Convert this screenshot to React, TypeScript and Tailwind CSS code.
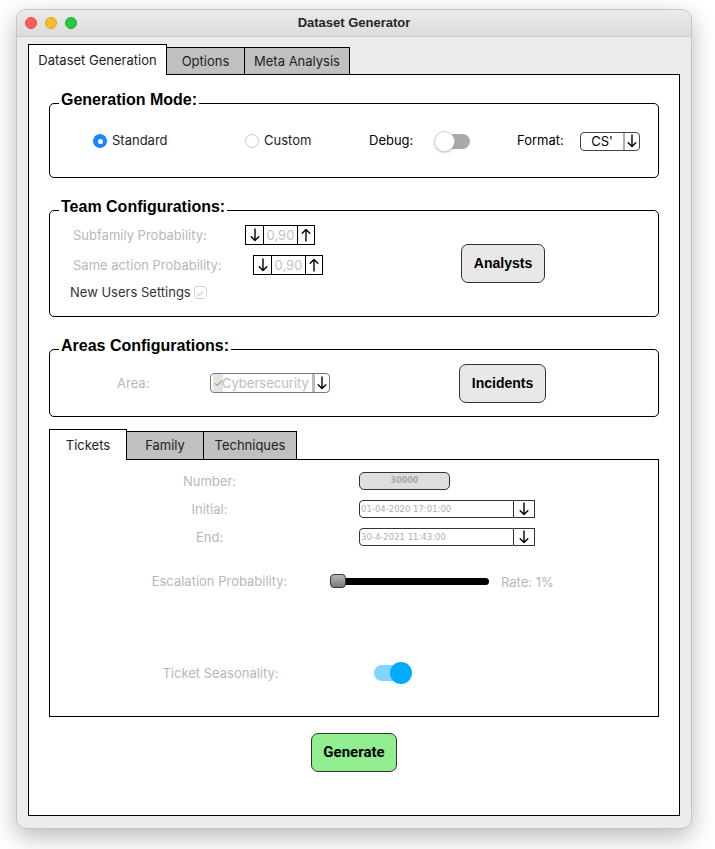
import React from 'react';

const ui = "font-['Inter',sans-serif]";
const bold = "font-['Liberation_Sans',Arial,sans-serif] font-bold";

function Arrow({ up = false }: { up?: boolean }) {
  return (
    <svg width="10" height="14" viewBox="0 0 10 14" fill="none" stroke="black" strokeWidth="1.4" strokeLinecap="round" strokeLinejoin="round">
      {up ? <path d="M5 13V1.5M1.2 5.3 5 1.5l3.8 3.8" /> : <path d="M5 1v11.5M1.2 8.7 5 12.5l3.8-3.8" />}
    </svg>
  );
}

function Group({ title, className, children }: { title: string; className: string; children: React.ReactNode }) {
  return (
    <div className={`relative border border-black rounded-[5px] ${className}`}>
      <span className={`absolute -top-[14px] left-[9px] bg-white px-[2px] text-[16px] leading-[20px] text-black ${bold}`}>
        {title}
      </span>
      {children}
    </div>
  );
}

function Spinner() {
  return (
    <div className="flex h-[20px] border border-black text-[13px] leading-none">
      <div className="w-[17px] flex items-center justify-center"><Arrow /></div>
      <div className="w-[35px] flex items-center justify-center border-l border-r border-black text-[#c4c4c4]">0,90</div>
      <div className="w-[16px] flex items-center justify-center"><Arrow up /></div>
    </div>
  );
}

function DateField({ value }: { value: string }) {
  return (
    <div className="flex h-[18px] w-[176px]">
      <div className="flex-1 flex items-center rounded-l-[4px] border border-[#333] pl-[1px] text-[8.5px] text-[#b0b0b0] font-['DejaVu_Sans',sans-serif]">
        {value}
      </div>
      <div className="w-[21px] flex items-center justify-center border border-l-0 border-[#333]">
        <Arrow />
      </div>
    </div>
  );
}

export default function App() {
  const label = `text-[13px] text-[#b8b8b8] ${ui}`;
  return (
    <div className="min-h-screen bg-white pt-[9px] pl-[16px]">
      <div className="w-[676px] h-[820px] rounded-[10px] bg-[#ececec] border border-[#c4c4c4] overflow-hidden shadow-[0_8px_24px_rgba(0,0,0,0.28)]">
        {/* title bar */}
        <div className="relative h-[27px] border-b border-[#c9c9c9] bg-gradient-to-b from-[#ebebeb] to-[#dcdcdc] flex items-center justify-center">
          <div className="absolute left-[8px] top-[7px] flex gap-[8px]">
            <span className="w-[12px] h-[12px] rounded-full bg-[#ff5f57] border border-[#e2463f]" />
            <span className="w-[12px] h-[12px] rounded-full bg-[#febc2e] border border-[#e1a116]" />
            <span className="w-[12px] h-[12px] rounded-full bg-[#28c840] border border-[#1aab29]" />
          </div>
          <span className={`text-[13px] text-[#262626] ${bold}`}>Dataset Generator</span>
        </div>

        <div className="pt-[7px] pl-[11px]">
          {/* tabs */}
          <div className={`flex items-end text-[13px] text-[#222] ${ui}`}>
            <div className="relative z-10 -mb-px h-[31px] w-[139px] bg-white border border-b-0 border-black flex items-start pt-[6px] justify-center">
              Dataset Generation
            </div>
            <div className="h-[27px] w-[78px] bg-[#c0c0c0] border border-l-0 border-b-0 border-black flex items-center justify-center pt-[1px]">
              Options
            </div>
            <div className="h-[27px] w-[105px] bg-[#c0c0c0] border border-l-0 border-b-0 border-black flex items-center justify-center pt-[1px]">
              Meta Analysis
            </div>
          </div>

          {/* main panel */}
          <div className="w-[652px] h-[742px] bg-white border border-black px-[20px] pt-[28px]">
            <Group title="Generation Mode:" className="h-[75px]">
              <div className={`h-full flex items-center pt-[1px] pl-[43px] text-[13px] text-[#222] ${ui}`}>
                <div className="w-[152px] flex items-center">
                  <span className="w-[14px] h-[14px] rounded-full bg-[#1a86ff] flex items-center justify-center">
                    <span className="w-[5px] h-[5px] rounded-full bg-white" />
                  </span>
                  <span className="ml-[5px]">Standard</span>
                </div>
                <div className="w-[124px] flex items-center">
                  <span className="w-[14px] h-[14px] rounded-full bg-white border border-[#c8c8c8]" />
                  <span className="ml-[5px]">Custom</span>
                </div>
                <div className="w-[65px] text-black">Debug:</div>
                <div className="relative w-[36px] h-[21px]">
                  <span className="absolute right-0 top-[3px] w-[30px] h-[15px] rounded-full bg-[#a9a9a9]" />
                  <span className="absolute left-0 top-0 w-[21px] h-[21px] rounded-full bg-white border border-[#d0d0d0] shadow-[0_1px_2px_rgba(0,0,0,0.2)]" />
                </div>
                <div className="ml-[47px] w-[63px] text-black">Format:</div>
                <div className="w-[60px] h-[19px] flex rounded-[4px] border border-[#444] text-black">
                  <div className="flex-1 flex items-center justify-end pr-[10px] leading-none">CS'</div>
                  <div className="w-[2px] bg-[#b0b0b0]" />
                  <div className="w-[14px] flex items-center justify-center"><Arrow /></div>
                </div>
              </div>
            </Group>

            <Group title="Team Configurations:" className="mt-[32px] h-[107px]">
              <div className="h-full flex">
                <div className={`w-[411px] pl-[23px] pt-[14px] ${ui}`}>
                  <div className="flex items-center h-[20px]">
                    <span className={`w-[172px] pt-[1px] ${label}`}>Subfamily Probability:</span>
                    <Spinner />
                  </div>
                  <div className="flex items-center h-[20px] mt-[10px]">
                    <span className={`w-[180px] pt-[1px] ${label}`}>Same action Probability:</span>
                    <Spinner />
                  </div>
                  <div className="flex items-center h-[17px] mt-[9px] -ml-[3px]">
                    <span className="text-[13px] text-[#333]">New Users Settings</span>
                    <span className="ml-[3px] w-[13px] h-[13px] rounded-[3px] border border-[#d4d4d4] bg-white flex items-center justify-center text-[10px] leading-none text-[#c4c4c4]">
                      ✓
                    </span>
                  </div>
                </div>
                <button className={`self-center w-[84px] h-[39px] rounded-[7px] border border-[#333] bg-[#e8e8e8] text-[14px] text-black ${bold}`}>
                  Analysts
                </button>
              </div>
            </Group>

            <Group title="Areas Configurations:" className="mt-[32px] h-[68px]">
              <div className={`h-full flex items-center pl-[67px] ${ui}`}>
                <span className={`w-[93px] pt-[1px] ${label}`}>Area:</span>
                <div className="w-[120px] h-[20px] flex rounded-[4px] border border-[#777] bg-white overflow-hidden">
                  <div className="w-[10px] ml-[2px] bg-[#e4e4e4] flex items-center justify-center text-[11px] leading-none text-[#5cc15c]">
                    ✓
                  </div>
                  <div className="flex-1 flex items-center -ml-[1px] text-[13px] leading-none text-[#bdbdbd]">Cybersecurity</div>
                  <div className="w-[3px] bg-[#bbbbbb]" />
                  <div className="w-[14px] flex items-center justify-center"><Arrow /></div>
                </div>
                <button className={`ml-[129px] w-[87px] h-[39px] rounded-[7px] border border-[#333] bg-[#e8e8e8] text-[14px] text-black ${bold}`}>
                  Incidents
                </button>
              </div>
            </Group>

            {/* inner tabs */}
            <div className={`mt-[12px] flex items-end text-[13px] text-[#222] ${ui}`}>
              <div className="relative z-10 -mb-px h-[31px] w-[78px] bg-white border border-b-0 border-black flex items-start pt-[6px] justify-center">
                Tickets
              </div>
              <div className="h-[28px] w-[77px] bg-[#c0c0c0] border border-l-0 border-b-0 border-black flex items-center justify-center pt-[1px]">
                Family
              </div>
              <div className="h-[28px] w-[93px] bg-[#c0c0c0] border border-l-0 border-b-0 border-black flex items-center justify-center pt-[1px]">
                Techniques
              </div>
            </div>
            <div className={`h-[258px] border border-black pt-[12px] ${ui}`}>
              <div className="flex items-center h-[18px] pl-[10px]">
                <span className={`w-[299px] pt-[1px] text-center ${label}`}>Number:</span>
                <div className="w-[91px] h-[18px] rounded-[5px] border border-[#333] bg-[#dedede] flex items-center justify-center text-[8px] font-bold text-[#a8a8a8] font-['DejaVu_Sans',sans-serif]">
                  30000
                </div>
              </div>
              <div className="flex items-center h-[18px] mt-[10px] pl-[10px]">
                <span className={`w-[299px] pt-[1px] text-center ${label}`}>Initial:</span>
                <DateField value="01-04-2020 17:01:00" />
              </div>
              <div className="flex items-center h-[18px] mt-[10px] pl-[10px]">
                <span className={`w-[299px] pt-[1px] text-center ${label}`}>End:</span>
                <DateField value="30-4-2021 11:43:00" />
              </div>
              <div className="flex items-center h-[14px] mt-[28px] pl-[59px]">
                <span className={`w-[221px] pt-[1px] text-center ${label}`}>Escalation Probability:</span>
                <div className="relative w-[159px] h-[14px] flex items-center">
                  <div className="w-full h-[7px] rounded-full bg-black" />
                  <div className="absolute left-0 top-0 w-[16px] h-[14px] rounded-[4px] border border-[#333] bg-gradient-to-b from-[#b8b8b8] to-[#7a7a7a]" />
                </div>
                <span className={`ml-[12px] mt-[4px] ${label}`}>Rate: 1%</span>
              </div>
              <div className="flex items-center h-[22px] mt-[74px] pl-[17px]">
                <span className={`w-[307px] pt-[1px] text-center ${label}`}>Ticket Seasonality:</span>
                <div className="relative w-[38px] h-[22px]">
                  <span className="absolute left-0 top-[3px] w-[32px] h-[16px] rounded-full bg-[#80d4ff]" />
                  <span className="absolute right-0 top-0 w-[22px] h-[22px] rounded-full bg-[#00aaff]" />
                </div>
              </div>
            </div>

            <div className="mt-[16px] flex justify-center">
              <button className="w-[86px] h-[39px] rounded-[7px] border border-[#333] bg-[#90ee90] text-[15px] font-bold text-black font-['Roboto',sans-serif]">
                Generate
              </button>
            </div>
          </div>
        </div>
      </div>
    </div>
  );
}
